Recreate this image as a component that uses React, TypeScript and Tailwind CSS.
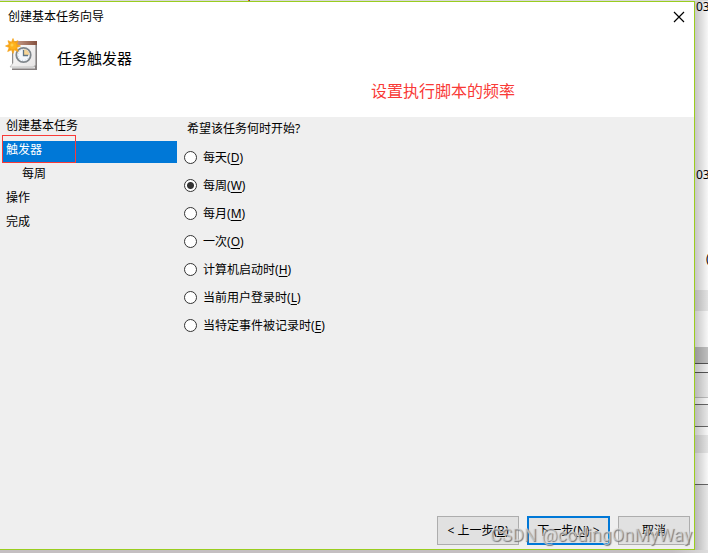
import { clsx } from "clsx";

interface Step {
  label: string;
  nested?: boolean;
  current?: boolean;
}

interface TriggerOption {
  value: string;
  label: string;
  accessKey: string;
}

const steps: Step[] = [
  { label: "创建基本任务" },
  { label: "触发器", current: true },
  { label: "每周", nested: true },
  { label: "操作" },
  { label: "完成" },
];

const triggers: TriggerOption[] = [
  { value: "daily", label: "每天", accessKey: "D" },
  { value: "weekly", label: "每周", accessKey: "W" },
  { value: "monthly", label: "每月", accessKey: "M" },
  { value: "once", label: "一次", accessKey: "O" },
  { value: "startup", label: "计算机启动时", accessKey: "H" },
  { value: "logon", label: "当前用户登录时", accessKey: "L" },
  { value: "event", label: "当特定事件被记录时", accessKey: "E" },
];

export default function App() {
  return (
    <div className="relative flex min-h-screen flex-col overflow-hidden bg-[#c4bfc1] pt-px font-['Noto_Sans','Noto_Sans_CJK_SC',sans-serif] text-xs leading-4 text-black">
      <div className="absolute top-0 left-0 flex h-px w-full bg-[#d9d9d9] pl-[248px]">
        <span className="w-px bg-orange-500" />
        <span className="w-px bg-slate-600" />
      </div>
      <div className="flex flex-1">
        <WizardDialog />
        <BackgroundWindow />
      </div>
      <div className="h-[3px] bg-linear-to-r from-[#c4bfc1] from-95% to-[#dcdcdc]" />
    </div>
  );
}

function WizardDialog() {
  return (
    <main className="relative flex flex-1 flex-col border-y border-r border-[#9acd1f] bg-[#efefef]">
      <header className="flex h-[115px] flex-col bg-white">
        <div className="flex h-[30px] items-center justify-between pr-[7px] pl-2">
          <h1>创建基本任务向导</h1>
          <button type="button" aria-label="关闭" className="p-0.5">
            <svg viewBox="0 0 12 12" className="size-3" fill="none" stroke="#000" strokeWidth="1.2">
              <path d="M1 1l10 10M11 1L1 11" />
            </svg>
          </button>
        </div>
        <div className="flex items-center gap-4 pt-1 pl-1">
          <TaskIcon />
          <h2 className="pt-2 text-[15px] leading-5">任务触发器</h2>
        </div>
        <p className="pt-[7px] pl-[371px] text-base leading-6 text-[#f93a37]">设置执行脚本的频率</p>
      </header>

      <div className="flex flex-1">
        <StepList />
        <TriggerForm />
      </div>

      <footer className="flex justify-end gap-2 p-1">
        <button type="button" className="h-[29px] w-[82px] border border-[#adadad] bg-[#e1e1e1] whitespace-nowrap">
          &lt; 上一步(<u>B</u>)
        </button>
        <button type="button" className="h-[29px] w-[83px] border-2 border-[#0078d7] bg-[#e1e1e1] whitespace-nowrap">
          下一步(<u>N</u>) &gt;
        </button>
        <button type="button" className="h-[29px] w-[72px] border border-[#adadad] bg-[#e1e1e1]">
          取消
        </button>
      </footer>

      <span className="pointer-events-none absolute right-0.5 bottom-0.5 font-[Roboto] text-lg leading-6 whitespace-nowrap text-[#e2e2e2]/60 [text-shadow:1px_1px_1px_#777]">
        CSDN @codingOnMyWay
      </span>
    </main>
  );
}

function StepList() {
  return (
    <nav className="w-[177px] pl-0.5">
      <ol className="flex flex-col gap-0.5">
        {steps.map((step) => (
          <li
            key={step.label}
            aria-current={step.current ? "step" : undefined}
            className={clsx(
              "relative h-[22px] leading-[18px]",
              step.nested ? "pl-5" : "pl-1",
              step.current && "bg-[#0078d7] text-white",
            )}
          >
            {step.label}
            {step.current ? (
              <span className="absolute -top-1.5 bottom-0 left-0 w-[74px] border border-[#f93a37]" />
            ) : null}
          </li>
        ))}
      </ol>
    </nav>
  );
}

function TriggerForm() {
  return (
    <fieldset className="flex-1 pt-1 pl-[7px]">
      <legend className="float-left w-full pl-[3px]">希望该任务何时开始?</legend>
      <div className="clear-both flex flex-col pt-1.5">
        {triggers.map((trigger) => (
          <label key={trigger.value} className="flex h-7 items-center gap-1.5">
            <input
              type="radio"
              name="trigger"
              value={trigger.value}
              defaultChecked={trigger.value === "weekly"}
              className="size-[13px] appearance-none rounded-full border border-[#333] bg-white checked:bg-[radial-gradient(circle,#333_3px,#fff_4px)]"
            />
            <span className="pt-0.5">
              {trigger.label}(<u className="underline-offset-2">{trigger.accessKey}</u>)
            </span>
          </label>
        ))}
      </div>
    </fieldset>
  );
}

// The window behind the dialog, seen only as a strip of its panels.
function BackgroundWindow() {
  return (
    <aside className="relative flex w-[13px] flex-col overflow-hidden bg-[#f7f7f7]">
      <span className="h-[168px] pl-px leading-3">03</span>
      <span className="h-[84px] pl-px leading-3">03</span>
      <span className="h-[37px] pl-[11px] leading-3">(</span>
      <span className="h-[21px] bg-[#e2e2e2]" />
      <span className="h-9" />
      <span className="h-4 bg-[#bebebe]" />
      <span className="h-2.5 border-y border-[#555] bg-[#eee]" />
      <span className="h-[25px] border-b border-[#bbb] bg-[#e6e6e6]" />
      <span className="h-[6px]" />
      <span className="h-[23px] border-y border-[#666] bg-[#e6e6e6]" />
      <span className="h-2" />
      <span className="h-[18px] bg-[#e2e2e2]" />
      <span className="h-8 border-b border-[#666]" />
      <span className="flex-1 bg-[#e6e6e6]" />
      <span className="absolute inset-0 bg-linear-to-r from-black/20 to-transparent" />
    </aside>
  );
}

function TaskIcon() {
  return (
    <svg viewBox="0 0 37 36" className="h-9 w-[37px]" aria-hidden="true">
      <defs>
        <linearGradient id="page" x1="0" y1="0" x2="1" y2="1">
          <stop offset="0" stopColor="#fff" />
          <stop offset="1" stopColor="#e6e4e4" />
        </linearGradient>
        <linearGradient id="binding" x1="0" y1="0" x2="1" y2="0">
          <stop offset="0" stopColor="#d0a590" />
          <stop offset="1" stopColor="#84503f" />
        </linearGradient>
      </defs>
      <path d="M8 7h25v27H8z" fill="#858080" />
      <path d="M8 30.500h23v2H8z" fill="#e4e4e4" />
      <path d="M9 6h22.500v23l-2 2H6l3-4z" fill="url(#page)" stroke="#aaa" strokeWidth=".6" />
      <path d="M9 5h24v4H9z" fill="url(#binding)" />
      <circle cx="19.500" cy="19" r="7.200" fill="#f4f8fd" stroke="#7f868b" strokeWidth="1.800" />
      <path d="M19.500 19v-6a6 6 0 0 1 6 6z" fill="#f7d596" />
      <circle cx="19.500" cy="19" r="5.500" fill="none" stroke="#b4c2ce" strokeWidth=".8" strokeDasharray="1 2" />
      <path d="M19.500 14v5.500H24" fill="none" stroke="#607585" strokeWidth="1.300" />
      <path
        d="M9 2.500l1.300 3.700 3.700-1.500-1.300 3.600 3.800 1.700-3.800 1.500 1.500 4-3.900-1.700L9 17.500l-1.500-3.700L3.700 15.500l1.500-4L1.500 10l3.700-1.600L4 4.700l3.500 1.500z"
        fill="#f8a514"
        stroke="#f5a21a"
        strokeWidth=".7"
      />
      <circle cx="9" cy="9.800" r="3.500" fill="#ffb21c" />
      <circle cx="8" cy="9" r="1.500" fill="#ffd04a" />
    </svg>
  );
}
